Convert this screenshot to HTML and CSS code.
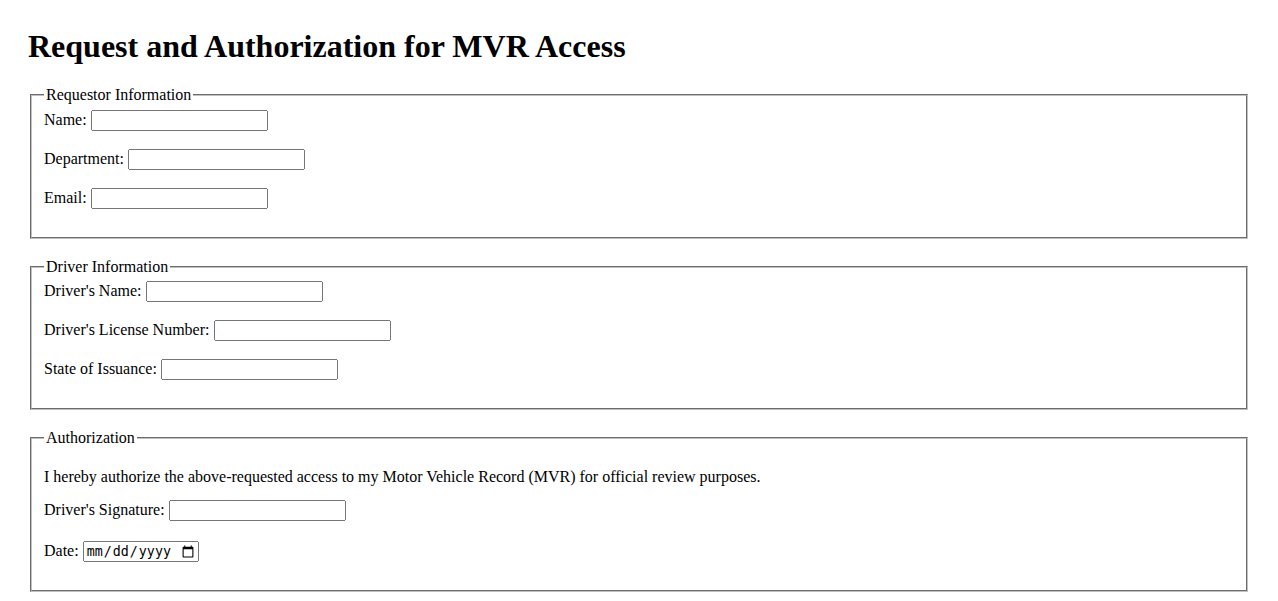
FILE: index.html
```html
<!DOCTYPE html>
<html lang="en">
<head>
<meta charset="utf-8">
<title>Request and Authorization for MVR Access</title>
<link rel="stylesheet" href="styles.css">
</head>
<body>
<h1 class="title">Request and Authorization for MVR Access</h1>
<form class="form">
  <fieldset class="group">
    <legend class="group-title">Requestor Information</legend>
    <div class="row"><label for="name">Name:</label> <input class="field" type="text" id="name"></div>
    <div class="row"><label for="dept">Department:</label> <input class="field" type="text" id="dept"></div>
    <div class="row"><label for="email">Email:</label> <input class="field" type="email" id="email"></div>
  </fieldset>
  <fieldset class="group">
    <legend class="group-title">Driver Information</legend>
    <div class="row"><label for="dname">Driver's Name:</label> <input class="field" type="text" id="dname"></div>
    <div class="row"><label for="dlic">Driver's License Number:</label> <input class="field" type="text" id="dlic"></div>
    <div class="row"><label for="state">State of Issuance:</label> <input class="field" type="text" id="state"></div>
  </fieldset>
  <fieldset class="group group-last">
    <legend class="group-title">Authorization</legend>
    <p class="statement">I hereby authorize the above-requested access to my Motor Vehicle Record (MVR) for official review purposes.</p>
    <div class="row row-sig"><label for="sig">Driver's Signature:</label> <input class="field" type="text" id="sig"></div>
    <div class="row"><label for="date">Date:</label> <input class="date-field" type="date" id="date"></div>
  </fieldset>
</form>
</body>
</html>
```
FILE: styles.css
```css
html, body {
  background: #fff;
}
body {
  margin: 0;
  padding: 28px 28px 20px 28px;
  font-family: "Liberation Serif", "Times New Roman", serif;
  font-size: 16px;
  color: #000;
}
.title {
  font-size: 32px;
  font-weight: bold;
  margin: 0 0 21px 0;
  line-height: 37px;
}
.form {
  margin: 0;
}
.group {
  margin: 0 2px 19px 2px;
  padding: 4.6px 12px 11px 12px;
  border: 2px groove #c0c0c0;
}
.group-last {
  padding-bottom: 11px;
}
.group-title {
  padding: 0 2px;
  line-height: 18px;
}
.row {
  height: 22px;
  margin-bottom: 17px;
  line-height: 22px;
}
.row-sig {
  margin-bottom: 19px;
}
.field {
  width: 177px;
  height: 21px;
  box-sizing: border-box;
  vertical-align: baseline;
}
.date-field {
  width: 116px;
  height: 21px;
  box-sizing: border-box;
}
.statement {
  margin: 16px 0 13px 0;
  line-height: 18px;
}
```
